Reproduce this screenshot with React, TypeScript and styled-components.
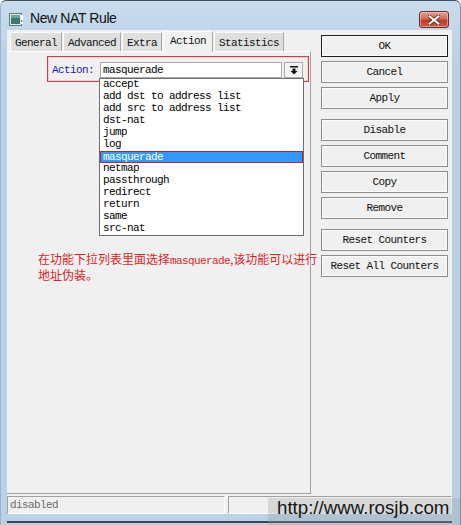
import React, { useState } from 'react';
import styled, { createGlobalStyle, css } from 'styled-components';

const GlobalStyle = createGlobalStyle`
  html, body {
    margin: 0;
    padding: 0;
    background: #ffffff;
  }
  body {
    width: 461px;
    height: 525px;
    overflow: hidden;
  }
`;

const mono = css`
  font-family: 'Liberation Mono', 'DejaVu Sans Mono', monospace;
  font-size: 11px;
  letter-spacing: -0.6px;
`;

const Window = styled.div`
  position: relative;
  box-sizing: border-box;
  width: 461px;
  height: 525px;
  display: flex;
  flex-direction: column;
  padding: 0 8px 0 6px;
  background: linear-gradient(#c9dcee, #bad1e6 60px, #bad1e6);
  border-top: 1px solid #44505c;
  border-left: 1px solid #9db4c8;
  border-right: 1px solid #7d94a8;
  border-radius: 6px 6px 0 0;
`;

const TitleBar = styled.div`
  height: 29px;
  display: flex;
  align-items: flex-start;
  padding: 0 3px 0 2px;
`;

const TitleIcon = styled.svg`
  margin-top: 12px;
  flex-shrink: 0;
`;

const TitleText = styled.span`
  margin: 9px 0 0 6px;
  font-family: 'Liberation Sans', Arial, sans-serif;
  font-size: 14px;
  letter-spacing: -0.4px;
  color: #111;
  flex: 1;
`;

const CloseButton = styled.div`
  margin-top: 10px;
  box-sizing: border-box;
  width: 30px;
  height: 17px;
  border: 1px solid #6e2b24;
  border-radius: 3px;
  background: linear-gradient(#e2a093, #d06c5c 45%, #bf3b2c 55%, #c95c45);
  box-shadow: inset 0 0 0 1px rgba(255, 220, 210, 0.5);
  display: flex;
  align-items: center;
  justify-content: center;
`;

const Client = styled.div`
  height: 484px;
  display: flex;
  flex-direction: column;
  background: #f0f0f0;
`;

const Main = styled.div`
  height: 466px;
  display: flex;
`;

const LeftPane = styled.div`
  width: 304px;
  display: flex;
  flex-direction: column;
  padding-bottom: 2px;
  box-sizing: border-box;
`;

const TabStrip = styled.div`
  height: 21px;
  display: flex;
  align-items: flex-end;
  gap: 1px;
  padding-left: 3px;
  position: relative;
  z-index: 2;
`;

const Tab = styled.div<{ $active?: boolean }>`
  ${mono};
  box-sizing: border-box;
  height: ${(p) => (p.$active ? '21px' : '19px')};
  margin-bottom: ${(p) => (p.$active ? '-1px' : '0')};
  padding: ${(p) => (p.$active ? '3px 6px 0' : '4px 4px 0')};
  background: ${(p) => (p.$active ? '#f0f0f0' : '#dfdfdf')};
  border-top: 1px solid #fbfbfb;
  border-left: 1px solid #fbfbfb;
  border-right: 1px solid #a7a7a7;
  color: #111;
  white-space: nowrap;
`;

const Panel = styled.div`
  flex: 1;
  position: relative;
  border-top: 1px solid #ffffff;
  border-right: 1px solid #a0a0a0;
  border-bottom: 1px solid #a0a0a0;
`;

const ActionRow = styled.div`
  box-sizing: border-box;
  width: 262px;
  height: 26px;
  margin: 4px 0 0 40px;
  display: flex;
  align-items: flex-start;
  padding: 5px 0 0 4px;
  border: 1px solid #c8404c;
  box-shadow: inset 0 0 0 1px #f3cdd2;
`;

const FieldLabel = styled.span`
  ${mono};
  width: 48px;
  line-height: 16px;
  color: #1c1ca8;
`;

const Combo = styled.div`
  position: relative;
  display: flex;
  gap: 2px;
`;

const ComboInput = styled.div`
  ${mono};
  box-sizing: border-box;
  width: 182px;
  height: 16px;
  line-height: 14px;
  padding-left: 2px;
  background: #ffffff;
  border: 1px solid #a9a9a9;
  color: #000;
`;

const ComboButton = styled.div`
  box-sizing: border-box;
  width: 19px;
  height: 16px;
  background: #f4f4f4;
  border: 1px solid #a9a9a9;
  display: flex;
  align-items: center;
  justify-content: center;
`;

const DropList = styled.ul`
  position: absolute;
  top: 16px;
  left: -1px;
  width: 205px;
  box-sizing: border-box;
  margin: 0;
  padding: 0;
  list-style: none;
  background: #ffffff;
  border: 1px solid #6e6e6e;
  z-index: 5;
`;

const DropItem = styled.li<{ $selected?: boolean }>`
  ${mono};
  box-sizing: border-box;
  height: 12px;
  line-height: 11px;
  padding-left: 2px;
  white-space: nowrap;
  color: ${(p) => (p.$selected ? '#ffffff' : '#000000')};
  background: ${(p) => (p.$selected ? '#3399ff' : 'transparent')};
  border: 1px solid ${(p) => (p.$selected ? '#a8283c' : 'transparent')};
  border-width: ${(p) => (p.$selected ? '1px' : '0 1px')};
`;

const Note = styled.div`
  margin: 170px 0 0 31px;
  width: 290px;
  font-family: 'Noto Sans CJK SC', 'Liberation Sans', sans-serif;
  font-size: 12px;
  line-height: 13px;
  color: #dc1f1f;
`;

const NoteMono = styled.span`
  ${mono};
  color: #dc1f1f;
`;

const ButtonColumn = styled.div`
  display: flex;
  flex-direction: column;
  gap: 10px;
  padding: 5px 0 0 10px;
`;

const ButtonGroup = styled.div`
  display: flex;
  flex-direction: column;
  gap: 4px;
`;

const DialogButton = styled.div<{ $default?: boolean }>`
  ${mono};
  box-sizing: border-box;
  width: 127px;
  height: 22px;
  line-height: 21px;
  text-align: center;
  color: #111;
  background: #f0f0f0;
  border: 1px solid ${(p) => (p.$default ? '#1e1e1e' : '#8c8c8c')};
  box-shadow: inset 0 0 0 1px #fbfbfb;
`;

const StatusBar = styled.div`
  height: 18px;
  display: flex;
  gap: 3px;
`;

const StatusField = styled.div<{ $width?: number }>`
  ${mono};
  box-sizing: border-box;
  ${(p) => (p.$width ? `width: ${p.$width}px;` : 'flex: 1;')}
  height: 18px;
  line-height: 16px;
  padding-left: 2px;
  color: #6a6a6a;
  border-top: 1px solid #a0a0a0;
  border-left: 1px solid #a0a0a0;
  border-bottom: 1px solid #ffffff;
  border-right: 1px solid #ffffff;
`;

const BottomFrame = styled.div`
  flex: 1;
  border-bottom: 2px solid #3a4652;
  margin-bottom: 2px;
`;

const Watermark = styled.div`
  position: absolute;
  left: 267px;
  top: 497px;
  right: 0;
  bottom: 0;
  padding-left: 9px;
  background: rgba(150, 150, 150, 0.28);
  font-family: 'Liberation Sans', Arial, sans-serif;
  font-size: 18.7px;
  line-height: 20px;
  color: #161616;
  white-space: nowrap;
`;

const tabs = ['General', 'Advanced', 'Extra', 'Action', 'Statistics'];

const actions = [
  'accept',
  'add dst to address list',
  'add src to address list',
  'dst-nat',
  'jump',
  'log',
  'masquerade',
  'netmap',
  'passthrough',
  'redirect',
  'return',
  'same',
  'src-nat',
];

const buttonGroups = [
  ['OK', 'Cancel', 'Apply'],
  ['Disable', 'Comment', 'Copy', 'Remove'],
  ['Reset Counters', 'Reset All Counters'],
];

const WindowIcon = () => (
  <TitleIcon width="15" height="13" viewBox="0 0 15 13">
    <rect x="0.5" y="0.5" width="12" height="12" fill="#dfe6ea" stroke="#6a767e" />
    <rect x="2" y="2" width="9" height="9" fill="#3f7a6e" />
    <rect x="2" y="2" width="9" height="3" fill="#6fa596" />
    <rect x="12" y="2" width="2" height="5" fill="#ffffff" />
    <rect x="12" y="9" width="2" height="2" fill="#ffffff" />
  </TitleIcon>
);

const CloseGlyph = () => (
  <svg width="12" height="10" viewBox="0 0 12 10">
    <path
      d="M1 1 L11 9 M11 1 L1 9"
      stroke="#5a1e18"
      strokeWidth="3.6"
      strokeLinecap="square"
    />
    <path
      d="M1.5 1.4 L10.5 8.6 M10.5 1.4 L1.5 8.6"
      stroke="#ffffff"
      strokeWidth="2"
      strokeLinecap="square"
    />
  </svg>
);

const DropArrow = () => (
  <svg width="8" height="9" viewBox="0 0 8 9">
    <rect x="0" y="0" width="8" height="1.5" fill="#111" />
    <path d="M2.5 2.5 H5.5 V5 H7.5 L4 8.5 L0.5 5 H2.5 Z" fill="#111" />
  </svg>
);

export default function App() {
  const [active] = useState('Action');
  const [selected] = useState('masquerade');

  return (
    <>
      <GlobalStyle />
      <Window>
        <TitleBar>
          <WindowIcon />
          <TitleText>New NAT Rule</TitleText>
          <CloseButton>
            <CloseGlyph />
          </CloseButton>
        </TitleBar>

        <Client>
          <Main>
            <LeftPane>
              <TabStrip>
                {tabs.map((t) => (
                  <Tab key={t} $active={t === active}>
                    {t}
                  </Tab>
                ))}
              </TabStrip>
              <Panel>
                <ActionRow>
                  <FieldLabel>Action:</FieldLabel>
                  <Combo>
                    <ComboInput>{selected}</ComboInput>
                    <ComboButton>
                      <DropArrow />
                    </ComboButton>
                    <DropList>
                      {actions.map((a) => (
                        <DropItem key={a} $selected={a === selected}>
                          {a}
                        </DropItem>
                      ))}
                    </DropList>
                  </Combo>
                </ActionRow>
                <Note>
                  在功能下拉列表里面选择<NoteMono>masquerade</NoteMono>,该功能可以进行地址伪装。
                </Note>
              </Panel>
            </LeftPane>

            <ButtonColumn>
              {buttonGroups.map((group, i) => (
                <ButtonGroup key={i}>
                  {group.map((b) => (
                    <DialogButton key={b} $default={b === 'OK'}>
                      {b}
                    </DialogButton>
                  ))}
                </ButtonGroup>
              ))}
            </ButtonColumn>
          </Main>

          <StatusBar>
            <StatusField $width={218}>disabled</StatusField>
            <StatusField />
          </StatusBar>
        </Client>

        <BottomFrame />
        <Watermark>http://www.rosjb.com</Watermark>
      </Window>
    </>
  );
}
